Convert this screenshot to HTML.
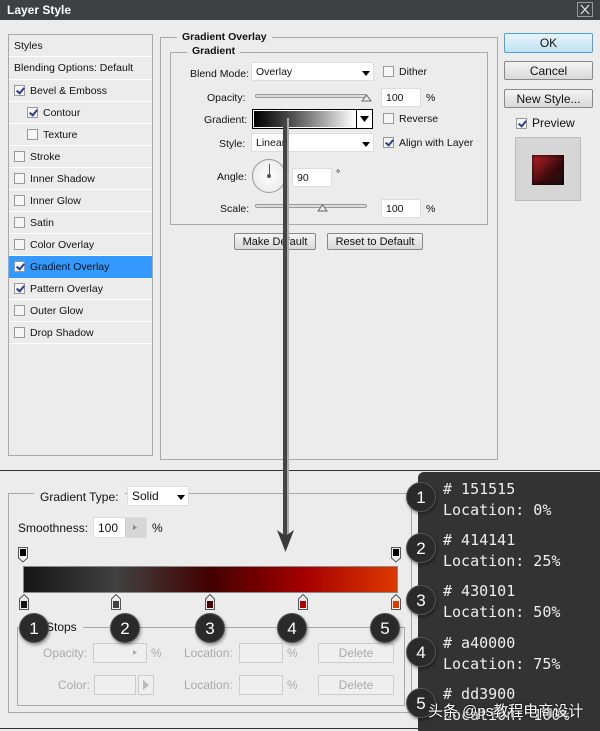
<!DOCTYPE html>
<html><head><meta charset="utf-8">
<style>
*{box-sizing:border-box;margin:0;padding:0}
body{width:600px;height:731px;overflow:hidden;background:#ececec;font-family:"Liberation Sans",sans-serif;font-size:10.5px;color:#111;position:relative}
.a{position:absolute}
.title{left:0;top:0;width:600px;height:20px;background:#3e4144;color:#fff;font-weight:bold;font-size:12px;padding:3px 0 0 7px}
.list{left:8px;top:34px;width:145px;height:422px;border:1px solid #a9a9a9;background:#ececec}
.row{position:absolute;left:0;width:143px;height:22px;border-bottom:1px solid #fff;padding:5px 0 0 5px}
.cb{display:inline-block;width:11px;height:11px;border:1px solid #999;background:#f6f6f6;vertical-align:-2px;margin-right:5px;position:relative}
.cb.on::after{content:"";position:absolute;left:3px;top:0px;width:3px;height:6px;border:solid #2b3d8f;border-width:0 2px 2px 0;transform:rotate(40deg)}
.grp{border:1px solid #a9a9a9}
.lbl{background:#ececec;font-weight:bold;padding:0 5px}
.inp{background:#fff;border:1px solid #ddd;height:19px;padding:3px 4px}
.btn{border:1px solid #888;border-radius:2px;background:linear-gradient(#f4f4f4,#d9d9d9);text-align:center;font-size:11px}
.slider{height:4px;border:1px solid #999;border-radius:2px;background:#ddd}
.circ{position:absolute;width:30px;height:30px;border-radius:50%;background:#2a2a2a;color:#fff;font-size:17px;text-align:center;line-height:30px;box-shadow:1px 2px 3px rgba(0,0,0,.4);border:1px solid #555}
.dis{color:#aaa}
.dinp{border:1px solid #ccc;background:#efefef;height:20px}
.mono{font-family:"DejaVu Sans Mono","Liberation Mono",monospace;color:#eee;font-size:15px;line-height:21px}
.stop{position:absolute;width:10px;height:16px}
</style></head><body>
<div class="a title">Layer Style</div>
<div class="a" style="left:577px;top:2px;width:16px;height:15px;border:1px solid #999"><svg width="14" height="13"><path d="M3 2L11 11M11 2L3 11" stroke="#ddd" stroke-width="1.3"/></svg></div>

<div class="a list">
<div class="row" style="top:0">Styles</div>
<div class="row" style="top:22px;height:23px">Blending Options: Default</div>
<div class="row" style="top:45px"><span class="cb on"></span>Bevel &amp; Emboss</div>
<div class="row" style="top:67px;padding-left:18px"><span class="cb on"></span>Contour</div>
<div class="row" style="top:89px;padding-left:18px"><span class="cb"></span>Texture</div>
<div class="row" style="top:111px"><span class="cb"></span>Stroke</div>
<div class="row" style="top:133px"><span class="cb"></span>Inner Shadow</div>
<div class="row" style="top:155px"><span class="cb"></span>Inner Glow</div>
<div class="row" style="top:177px"><span class="cb"></span>Satin</div>
<div class="row" style="top:199px"><span class="cb"></span>Color Overlay</div>
<div class="row" style="top:221px;background:#3399ff;border-color:#3399ff"><span class="cb on"></span>Gradient Overlay</div>
<div class="row" style="top:243px"><span class="cb on"></span>Pattern Overlay</div>
<div class="row" style="top:265px"><span class="cb"></span>Outer Glow</div>
<div class="row" style="top:287px"><span class="cb"></span>Drop Shadow</div>
</div>

<div class="a grp" style="left:160px;top:37px;width:338px;height:423px"></div>
<div class="a lbl" style="left:177px;top:31px">Gradient Overlay</div>
<div class="a grp" style="left:170px;top:52px;width:318px;height:173px"></div>
<div class="a lbl" style="left:187px;top:45px">Gradient</div>

<div class="a" style="left:190px;top:68px">Blend Mode:</div>
<div class="a inp" style="left:251px;top:62px;width:123px">Overlay</div>
<svg class="a" style="left:362px;top:71px" width="8" height="5"><path d="M0 0H8L4 5Z"/></svg>
<div class="a" style="left:383px;top:66px"><span class="cb"></span>Dither</div>

<div class="a" style="left:207px;top:92px">Opacity:</div>
<div class="a slider" style="left:255px;top:94px;width:112px"></div>
<svg class="a" style="left:361px;top:94px" width="11" height="8"><path d="M1 7L5.5 1L10 7Z" fill="#eee" stroke="#666"/></svg>
<div class="a inp" style="left:381px;top:88px;width:40px">100</div>
<div class="a" style="left:426px;top:92px">%</div>

<div class="a" style="left:204px;top:114px">Gradient:</div>
<div class="a" style="left:252px;top:109px;width:121px;height:20px;border:1px solid #000;background:#fff"><div style="position:absolute;left:1px;top:1px;width:101px;height:16px;background:linear-gradient(90deg,#000,#555 40%,#fff)"></div><div style="position:absolute;left:103px;top:0;width:1px;height:18px;background:#000"></div><svg style="position:absolute;left:107px;top:6px" width="9" height="6"><path d="M0 0H9L4.5 6Z"/></svg></div>
<div class="a" style="left:383px;top:113px"><span class="cb"></span>Reverse</div>

<div class="a" style="left:219px;top:138px">Style:</div>
<div class="a inp" style="left:251px;top:133px;width:123px">Linear</div>
<svg class="a" style="left:362px;top:142px" width="8" height="5"><path d="M0 0H8L4 5Z"/></svg>
<div class="a" style="left:383px;top:137px"><span class="cb on"></span>Align with Layer</div>

<div class="a" style="left:217px;top:171px">Angle:</div>
<div class="a" style="left:252px;top:159px;width:34px;height:34px;border-radius:50%;border:1px solid #999;background:radial-gradient(#fff,#e4e4e4)"><div style="position:absolute;left:16px;top:4px;width:1px;height:12px;background:#555"></div><div style="position:absolute;left:14px;top:14px;width:4px;height:4px;border-radius:50%;background:#555"></div></div>
<div class="a inp" style="left:292px;top:168px;width:40px">90</div>
<div class="a" style="left:336px;top:168px">°</div>

<div class="a" style="left:220px;top:203px">Scale:</div>
<div class="a slider" style="left:255px;top:204px;width:112px"></div>
<svg class="a" style="left:317px;top:204px" width="11" height="8"><path d="M1 7L5.5 1L10 7Z" fill="#eee" stroke="#666"/></svg>
<div class="a inp" style="left:381px;top:199px;width:40px">100</div>
<div class="a" style="left:426px;top:203px">%</div>

<div class="a btn" style="left:234px;top:233px;width:82px;height:17px;padding-top:2px">Make Default</div>
<div class="a btn" style="left:327px;top:233px;width:96px;height:17px;padding-top:2px">Reset to Default</div>

<div class="a btn" style="left:504px;top:33px;width:89px;height:20px;border-color:#4aa3d8;background:linear-gradient(#e9f5fc,#bfe0f2);font-size:12px;padding-top:2px">OK</div>
<div class="a btn" style="left:504px;top:61px;width:89px;height:19px;font-size:12px;padding-top:2px">Cancel</div>
<div class="a btn" style="left:504px;top:89px;width:89px;height:19px;font-size:12px;padding-top:2px">New Style...</div>
<div class="a" style="left:516px;top:116px;font-size:12px"><span class="cb on"></span>Preview</div>
<div class="a" style="left:515px;top:137px;width:66px;height:64px;border:1px solid #bbb;background:#d6d6d6"><div style="position:absolute;left:16px;top:17px;width:32px;height:30px;background:linear-gradient(135deg,#c0202a,#3a0a0c 60%,#1a1010);box-shadow:inset 0 0 4px #000"></div></div>

<div class="a" style="left:0;top:470px;width:600px;height:1px;background:#333"></div>
<div class="a" style="left:0;top:728px;width:600px;height:1px;background:#333"></div>

<div class="a grp" style="left:8px;top:493px;width:404px;height:220px"></div>
<div class="a" style="left:34px;top:489px;background:#ececec;padding:0 6px;font-size:12px;line-height:16px">Gradient Type:</div>
<div class="a inp" style="left:127px;top:486px;width:62px;height:20px;font-size:12px;padding-top:2px">Solid</div>
<svg class="a" style="left:177px;top:495px" width="8" height="5"><path d="M0 0H8L4 5Z"/></svg>
<div class="a" style="left:18px;top:521px;font-size:12px">Smoothness:</div>
<div class="a inp" style="left:93px;top:517px;width:54px;height:21px;font-size:12px;padding-top:3px">100</div>
<div class="a" style="left:125px;top:518px;width:21px;height:19px;background:#d6d6d6;border-left:1px solid #ccc"></div>
<svg class="a" style="left:133px;top:525px" width="4" height="5"><path d="M0 0L4 2.5L0 5Z" fill="#888"/></svg>
<div class="a" style="left:152px;top:521px;font-size:12px">%</div>

<svg class="a" style="left:18px;top:547px" width="10" height="16"><path d="M0.5 0.5H9.5V11L5 15L0.5 11Z" fill="#eee" stroke="#555"/><rect x="2" y="2" width="6" height="7"/></svg>
<svg class="a" style="left:391px;top:547px" width="10" height="16"><path d="M0.5 0.5H9.5V11L5 15L0.5 11Z" fill="#eee" stroke="#555"/><rect x="2" y="2" width="6" height="7"/></svg>
<div class="a" style="left:23px;top:566px;width:375px;height:27px;border:1px solid #888;background:linear-gradient(90deg,#151515 0%,#414141 25%,#430101 50%,#a40000 75%,#dd3900 100%)"></div>
<svg class="stop" style="left:19px;top:594px" width="10" height="16"><path d="M5 0.5L9.5 5V15.5H0.5V5Z" fill="#eee" stroke="#555"/><rect x="2" y="7" width="6" height="7" fill="#151515"/></svg>
<svg class="stop" style="left:111px;top:594px" width="10" height="16"><path d="M5 0.5L9.5 5V15.5H0.5V5Z" fill="#eee" stroke="#555"/><rect x="2" y="7" width="6" height="7" fill="#414141"/></svg>
<svg class="stop" style="left:205px;top:594px" width="10" height="16"><path d="M5 0.5L9.5 5V15.5H0.5V5Z" fill="#eee" stroke="#555"/><rect x="2" y="7" width="6" height="7" fill="#430101"/></svg>
<svg class="stop" style="left:298px;top:594px" width="10" height="16"><path d="M5 0.5L9.5 5V15.5H0.5V5Z" fill="#eee" stroke="#555"/><rect x="2" y="7" width="6" height="7" fill="#a40000"/></svg>
<svg class="stop" style="left:391px;top:594px" width="10" height="16"><path d="M5 0.5L9.5 5V15.5H0.5V5Z" fill="#eee" stroke="#555"/><rect x="2" y="7" width="6" height="7" fill="#dd3900"/></svg>

<div class="a" style="left:17px;top:627px;width:388px;height:79px;border:1px solid #a9a9a9"></div>
<div class="a" style="left:40px;top:620px;background:#ececec;padding:0 6px;font-size:12px">Stops</div>
<div class="a dis" style="left:43px;top:646px;font-size:12px">Opacity:</div>
<div class="a dinp" style="left:93px;top:643px;width:54px"></div>
<svg class="a" style="left:133px;top:650px" width="4" height="5"><path d="M0 0L4 2.5L0 5Z" fill="#aaa"/></svg>
<div class="a dis" style="left:151px;top:646px;font-size:12px">%</div>
<div class="a dis" style="left:184px;top:646px;font-size:12px">Location:</div>
<div class="a dinp" style="left:239px;top:643px;width:44px"></div>
<div class="a dis" style="left:287px;top:646px;font-size:12px">%</div>
<div class="a dinp dis" style="left:318px;top:643px;width:76px;text-align:center;font-size:12px;padding-top:2px;border-radius:2px">Delete</div>
<div class="a dis" style="left:58px;top:678px;font-size:12px">Color:</div>
<div class="a dinp" style="left:94px;top:675px;width:42px"></div>
<div class="a dinp" style="left:138px;top:675px;width:16px"></div>
<svg class="a" style="left:143px;top:680px" width="6" height="10"><path d="M0 0L6 5L0 10Z" fill="#bbb"/></svg>
<div class="a dis" style="left:184px;top:678px;font-size:12px">Location:</div>
<div class="a dinp" style="left:239px;top:675px;width:44px"></div>
<div class="a dis" style="left:287px;top:678px;font-size:12px">%</div>
<div class="a dinp dis" style="left:318px;top:675px;width:76px;text-align:center;font-size:12px;padding-top:2px;border-radius:2px">Delete</div>

<div class="circ" style="left:19px;top:613px">1</div>
<div class="circ" style="left:110px;top:613px">2</div>
<div class="circ" style="left:195px;top:613px">3</div>
<div class="circ" style="left:277px;top:613px">4</div>
<div class="circ" style="left:370px;top:613px">5</div>

<svg class="a" style="left:275px;top:118px" width="22" height="436"><rect x="8" y="0" width="5" height="418" fill="#444"/><rect x="12" y="0" width="2" height="418" fill="#aaa"/><path d="M2 412L10.5 434L19 412L10.5 418Z" fill="#3a3a3a"/></svg>

<div class="a" style="left:418px;top:472px;width:182px;height:259px;background:#333;border-radius:6px 0 0 0"></div>
<div class="a mono" style="left:443px;top:479px"># 151515<br>Location: 0%</div>
<div class="a mono" style="left:443px;top:530px"># 414141<br>Location: 25%</div>
<div class="a mono" style="left:443px;top:581px"># 430101<br>Location: 50%</div>
<div class="a mono" style="left:443px;top:633px"># a40000<br>Location: 75%</div>
<div class="a mono" style="left:443px;top:684px"># dd3900<br>Location: 100%</div>
<div class="circ" style="left:406px;top:482px">1</div>
<div class="circ" style="left:406px;top:533px">2</div>
<div class="circ" style="left:406px;top:585px">3</div>
<div class="circ" style="left:406px;top:637px">4</div>
<div class="circ" style="left:406px;top:688px">5</div>
<div class="a" style="left:428px;top:700px;color:#fff;font-size:15px;font-family:'Liberation Sans','Noto Sans CJK SC',sans-serif;text-shadow:0 0 2px #000">头条 @ps教程电商设计</div>
</body></html>
